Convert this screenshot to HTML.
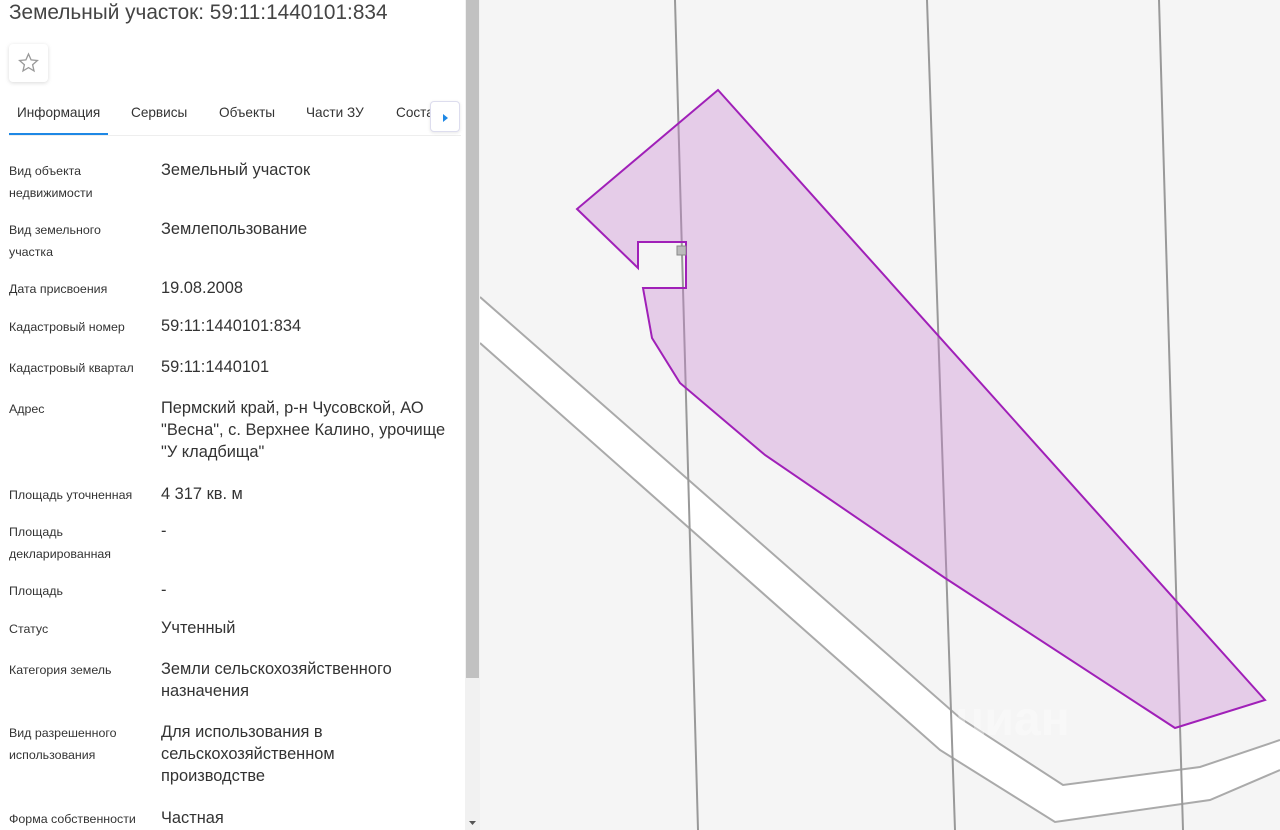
<!DOCTYPE html>
<html><head><meta charset="utf-8"><style>
*{margin:0;padding:0;box-sizing:border-box}
body{width:1280px;height:830px;overflow:hidden;background:#fff;font-family:"Liberation Sans",sans-serif;position:relative}
.l{position:absolute;left:9px;font-size:12.4px;line-height:22px;color:#333}
.v{position:absolute;left:161px;font-size:16.4px;line-height:22px;color:#333}
.tab{position:absolute;top:105px;font-size:13.6px;color:#333}
</style></head><body>
<div style="position:absolute;left:9px;top:1px;font-size:20.8px;color:#444">Земельный участок: 59:11:1440101:834</div>
<div style="position:absolute;left:9px;top:44px;width:39px;height:38px;border-radius:4px;box-shadow:0 1px 4px rgba(0,0,0,.15);background:#fff">
<svg width="39" height="38" viewBox="0 0 39 38"><path d="M19.5 10l2.6 5.9 6.3.6-4.8 4.2 1.4 6.2-5.5-3.3-5.5 3.3 1.4-6.2-4.8-4.2 6.3-.6z" fill="none" stroke="#999" stroke-width="1.3"/></svg></div>
<div class="tab" style="left:17px">Информация</div>
<div class="tab" style="left:131px">Сервисы</div>
<div class="tab" style="left:219px">Объекты</div>
<div class="tab" style="left:306px">Части ЗУ</div>
<div class="tab" style="left:396px">Соста</div>
<div style="position:absolute;left:9px;top:133px;width:99px;height:2px;background:#1e88e5"></div>
<div style="position:absolute;left:9px;top:135px;width:452px;height:1px;background:#eee"></div>
<div style="position:absolute;left:430px;top:101px;width:30px;height:31px;background:#fff;border:1px solid #dde;border-radius:4px;box-shadow:0 1px 3px rgba(0,0,0,.1)"><svg width="30" height="31"><path d="M12 12l5 4-5 4z" fill="#1e88e5"/></svg></div>

<div class="l" style="top:160px">Вид объекта<br>недвижимости</div><div class="v" style="top:159px">Земельный участок</div>
<div class="l" style="top:219px">Вид земельного<br>участка</div><div class="v" style="top:218px">Землепользование</div>
<div class="l" style="top:278px">Дата присвоения</div><div class="v" style="top:277px">19.08.2008</div>
<div class="l" style="top:316px">Кадастровый номер</div><div class="v" style="top:315px">59:11:1440101:834</div>
<div class="l" style="top:357px">Кадастровый квартал</div><div class="v" style="top:356px">59:11:1440101</div>
<div class="l" style="top:398px">Адрес</div><div class="v" style="top:397px">Пермский край, р-н Чусовской, АО<br>"Весна", с. Верхнее Калино, урочище<br>"У кладбища"</div>
<div class="l" style="top:484px">Площадь уточненная</div><div class="v" style="top:483px">4 317 кв. м</div>
<div class="l" style="top:521px">Площадь<br>декларированная</div><div class="v" style="top:520px">-</div>
<div class="l" style="top:580px">Площадь</div><div class="v" style="top:579px">-</div>
<div class="l" style="top:618px">Статус</div><div class="v" style="top:617px">Учтенный</div>
<div class="l" style="top:659px">Категория земель</div><div class="v" style="top:658px">Земли сельскохозяйственного<br>назначения</div>
<div class="l" style="top:722px">Вид разрешенного<br>использования</div><div class="v" style="top:721px">Для использования в<br>сельскохозяйственном<br>производстве</div>
<div class="l" style="top:808px">Форма собственности</div><div class="v" style="top:807px">Частная</div>

<div style="position:absolute;left:465px;top:0;width:15px;height:830px;background:#f1f1f1"></div>
<div style="position:absolute;left:466px;top:0;width:13px;height:678px;background:#c1c1c1"></div>
<svg style="position:absolute;left:465px;top:815px" width="15" height="15"><path d="M4 6h7l-3.5 4z" fill="#555"/></svg>

<svg style="position:absolute;left:480px;top:0" width="800" height="830" viewBox="480 0 800 830">
<rect x="480" y="0" width="800" height="830" fill="#f5f5f5"/>
<path d="M480 297 L960 718 L1063 785 L1200 767 L1280 740 L1280 770 L1210 800 L1055 822 L940 750 L480 343Z" fill="#fff"/>
<path d="M480 297 L960 718 L1063 785 L1200 767 L1280 740" fill="none" stroke="#aaa" stroke-width="2"/>
<path d="M480 343 L940 750 L1055 822 L1210 800 L1280 770" fill="none" stroke="#aaa" stroke-width="2"/>
<path d="M675 0 L698 830 M927 0 L955 830 M1159 0 L1183 830" stroke="#999" stroke-width="2" fill="none"/>
<path d="M718 90 L1265 700 L1175 728 L945 578 L765 455 L680 383 L652 338 L643 288 L686 288 L686 242 L638 242 L638 268 L577 209Z" fill="rgba(200,130,210,0.35)" stroke="#a020b8" stroke-width="2"/>
<rect x="677" y="246" width="9" height="9" fill="#bbb" stroke="#888"/>
<text x="955" y="735" font-family="Liberation Sans" font-size="48" font-weight="bold" fill="#fff" opacity=".35">циан</text>
</svg>
</body></html>
